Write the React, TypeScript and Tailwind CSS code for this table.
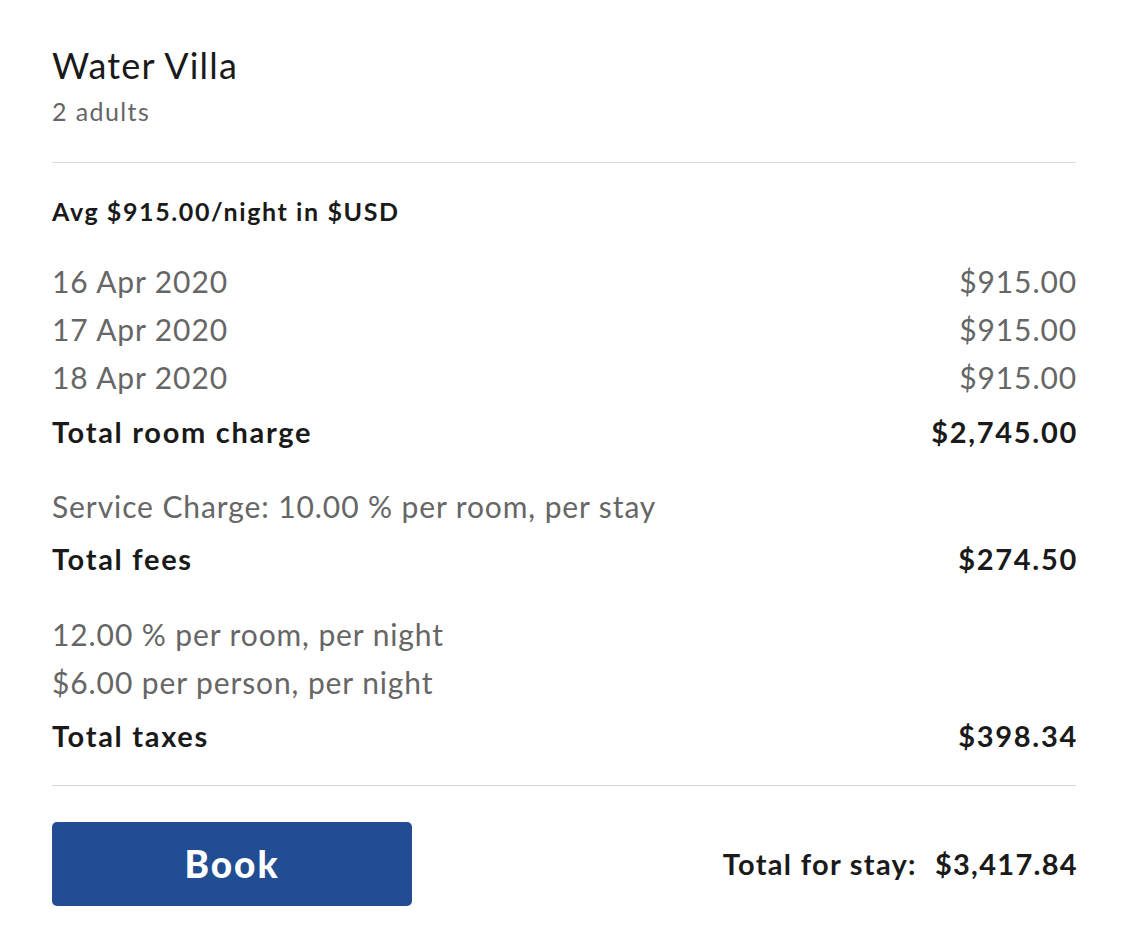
import React from "react";

function Row({ label, value }: { label: string; value: string }) {
  return (
    <div className="flex justify-between text-[30px] leading-[48px] tracking-[0.9px] text-[#666666]">
      <span>{label}</span>
      <span className="-mr-[1px]">{value}</span>
    </div>
  );
}

function Total({ label, value, mt }: { label: string; value: string; mt: string }) {
  return (
    <div className={`flex justify-between text-[29px] leading-[40px] font-bold tracking-[1.7px] text-[#1a1a1a] ${mt}`}>
      <span>{label}</span>
      <span className="-mr-[2px]">{value}</span>
    </div>
  );
}

export default function App() {
  return (
    <div className="w-[1144px] h-[930px] bg-white pl-[52px] pr-[68px] pt-[43px] font-['Lato',sans-serif]">
      <div className="text-[36px] leading-[44px] tracking-[1.2px] text-[#1a1a1a]">Water Villa</div>
      <div className="mt-[8px] text-[25px] leading-[32px] tracking-[1.4px] text-[#666666]">2 adults</div>
      <div className="mt-[35px] h-px bg-[#d9d9d9]" />
      <div className="mt-[32px] text-[25px] leading-[32px] font-bold tracking-[1.6px] text-[#1a1a1a]">
        Avg $915.00/night in $USD
      </div>
      <div className="mt-[30px]">
        <Row label="16 Apr 2020" value="$915.00" />
        <Row label="17 Apr 2020" value="$915.00" />
        <Row label="18 Apr 2020" value="$915.00" />
      </div>
      <Total label="Total room charge" value="$2,745.00" mt="mt-[11px]" />
      <div className="mt-[30px]">
        <Row label="Service Charge: 10.00 % per room, per stay" value="" />
      </div>
      <Total label="Total fees" value="$274.50" mt="mt-[9px]" />
      <div className="mt-[31px]">
        <Row label="12.00 % per room, per night" value="" />
        <Row label="$6.00 per person, per night" value="" />
      </div>
      <Total label="Total taxes" value="$398.34" mt="mt-[10px]" />
      <div className="mt-[29px] h-px bg-[#d9d9d9]" />
      <div className="mt-[36px] flex items-center justify-between">
        <button className="w-[360px] h-[84px] rounded-[5px] bg-[#214d92] text-white text-[37px] font-black tracking-[2px]">
          Book
        </button>
        <div className="-mr-[2px] text-[29px] font-bold tracking-[1.3px] text-[#1a1a1a]">
          Total for stay:<span className="ml-[18px]">$3,417.84</span>
        </div>
      </div>
    </div>
  );
}
